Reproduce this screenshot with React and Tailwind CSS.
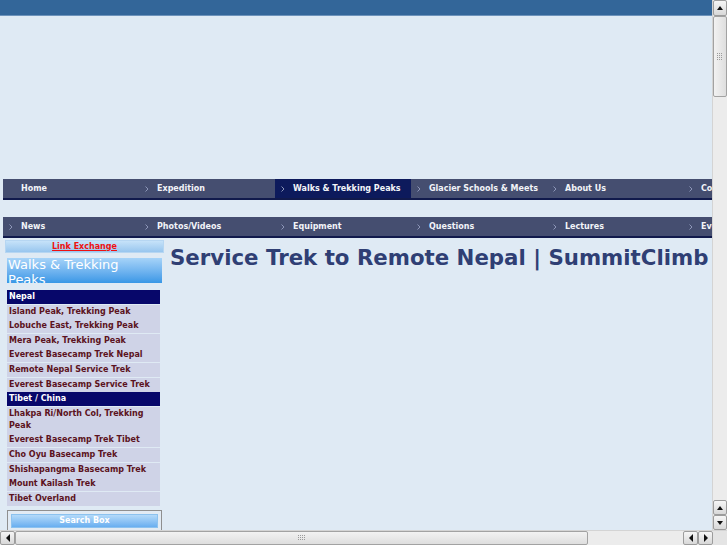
const NAV1 = ['Home', 'Expedition', 'Walks & Trekking Peaks', 'Glacier Schools & Meets', 'About Us', 'Contact']
const NAV2 = ['News', 'Photos/Videos', 'Equipment', 'Questions', 'Lectures', 'Events']

const SIDE = [
  { t: 'Nepal', head: true },
  { t: 'Island Peak, Trekking Peak' },
  { t: 'Lobuche East, Trekking Peak' },
  { t: 'Mera Peak, Trekking Peak' },
  { t: 'Everest Basecamp Trek Nepal' },
  { t: 'Remote Nepal Service Trek' },
  { t: 'Everest Basecamp Service Trek' },
  { t: 'Tibet / China', head: true },
  { t: 'Lhakpa Ri/North Col, Trekking Peak' },
  { t: 'Everest Basecamp Trek Tibet' },
  { t: 'Cho Oyu Basecamp Trek' },
  { t: 'Shishapangma Basecamp Trek' },
  { t: 'Mount Kailash Trek' },
  { t: 'Tibet Overland' },
]

function Chevron() {
  return (
    <svg width="4" height="6" viewBox="0 0 4 6" className="shrink-0">
      <path d="M0.5 0.5 L3 3 L0.5 5.5" fill="none" stroke="#8d96b8" strokeWidth="1" />
    </svg>
  )
}

function NavBar({ items, active, firstArrow }) {
  return (
    <div className="ml-[3px] flex h-[21px] w-max bg-[#454e70] border-b-2 border-[#111a4c]">
      {items.map((it, i) => (
        <div
          key={it}
          className={`flex h-[19px] w-[136px] shrink-0 items-center ${i === active ? 'bg-[#0d1a5c]' : ''}`}
        >
          <div className="w-[6px]" />
          <div className="w-[12px]">{(i > 0 || firstArrow) && <Chevron />}</div>
          <span className="whitespace-nowrap text-[8px] font-bold text-[#f2f4f8]">{it}</span>
        </div>
      ))}
    </div>
  )
}

function Arrow({ dir }) {
  const paths = {
    up: 'M1 5 L4 1 L7 5 Z',
    down: 'M1 1 L4 5 L7 1 Z',
    left: 'M5 0 L1 4 L5 8 Z',
    right: 'M1 0 L5 4 L1 8 Z',
  }
  const vert = dir === 'up' || dir === 'down'
  return (
    <svg width={vert ? 8 : 6} height={vert ? 6 : 8} viewBox={vert ? '0 0 8 6' : '0 0 6 8'}>
      <path d={paths[dir]} fill="#111" />
    </svg>
  )
}

function SButton({ dir, className = '' }) {
  return (
    <div
      className={`flex items-center justify-center rounded-[2px] border border-[#9c9c9c] bg-gradient-to-b from-[#f6f6f6] to-[#d8d8d8] ${className}`}
    >
      <Arrow dir={dir} />
    </div>
  )
}

function Grip({ vertical }) {
  const dots = []
  const cols = vertical ? 3 : 4
  const rows = vertical ? 4 : 3
  for (let r = 0; r < rows; r++)
    for (let c = 0; c < cols; c++)
      dots.push(<rect key={`${r}-${c}`} x={c * 2} y={r * 2} width="1" height="1" fill="#9a9a9a" />)
  return (
    <svg width={cols * 2} height={rows * 2}>
      {dots}
    </svg>
  )
}

export default function App() {
  return (
    <div className="flex h-[545px] w-[727px] flex-col overflow-hidden bg-[#dfeaf4] font-['DejaVu_Sans',sans-serif]">
      <div className="flex min-h-0 flex-1">
        {/* page */}
        <div className="min-w-0 flex-1 overflow-hidden">
          <div className="w-[830px]">
            <div className="h-[16px] bg-[#336699] border-b border-[#6d93bb]" />
            <div className="h-[163px]" />
            <NavBar items={NAV1} active={2} firstArrow={false} />
            <div className="h-[17px]" />
            <NavBar items={NAV2} active={-1} firstArrow={true} />

            <div className="mt-[2px] flex">
              {/* sidebar */}
              <div className="ml-[5px] w-[159px] shrink-0">
                <div className="flex h-[13px] items-center justify-center border border-[#b6d6f2] bg-gradient-to-b from-[#c6e2f9] to-[#98c6ee]">
                  <span className="text-[8px] font-bold text-[#ee1111] underline">Link Exchange</span>
                </div>

                <div className="mx-[2px] mt-[5px] h-[25px] overflow-hidden bg-gradient-to-b from-[#a6d3f8] to-[#3897e6] pl-[1px] pr-[12px] text-[13px] leading-[14.5px] text-white">
                  Walks &amp; Trekking Peaks
                </div>

                <div className="mx-[2px] mt-[7px] w-[153px]">
                  {SIDE.map((s) => (
                    <div
                      key={s.t}
                      className={`mb-[0.6px] py-[1px] pl-[2px] pr-[2px] text-[8px] font-bold leading-[12px] ${
                        s.head ? 'bg-[#07076a] text-white' : 'bg-[#cfd3e7] text-[#5b1220]'
                      }`}
                    >
                      {s.t}
                    </div>
                  ))}
                </div>

                <div className="mx-[2px] mt-[4px] h-[24px] border border-[#8f8f8f] bg-[#e2ebf4] px-[3px] pt-[3px]">
                  <div className="flex h-[14px] items-center justify-center border border-[#8cc2ef] bg-gradient-to-b from-[#b4daf9] to-[#68aef0]">
                    <span className="text-[8px] font-bold text-white">Search Box</span>
                  </div>
                </div>
              </div>

              {/* main */}
              <div className="ml-[6px] flex-1">
                <h1 className="mt-[5px] whitespace-nowrap text-[21.3px] font-bold leading-[26px] text-[#2f3f74]">
                  Service Trek to Remote Nepal | SummitClimb
                </h1>
              </div>
            </div>
          </div>
        </div>

        {/* vertical scrollbar */}
        <div className="flex w-[15px] shrink-0 flex-col bg-[#ececec] border-l border-[#d4d4d4]">
          <SButton dir="up" className="h-[16px]" />
          <div className="flex h-[81px] items-center justify-center rounded-[2px] border border-[#a2a2a2] bg-gradient-to-r from-[#f2f2f2] to-[#dedede]">
            <Grip vertical />
          </div>
          <div className="flex-1" />
          <SButton dir="up" className="h-[15px]" />
          <SButton dir="down" className="h-[15px]" />
        </div>
      </div>

      {/* horizontal scrollbar */}
      <div className="flex h-[15px] shrink-0 bg-[#ececec] border-t border-[#d4d4d4]">
        <SButton dir="left" className="w-[15px]" />
        <div className="flex w-[573px] items-center justify-center rounded-[2px] border border-[#a2a2a2] bg-gradient-to-b from-[#f2f2f2] to-[#dedede]">
          <Grip />
        </div>
        <div className="flex-1" />
        <SButton dir="left" className="w-[15px]" />
        <SButton dir="right" className="w-[15px]" />
        <div className="w-[14px] bg-[#e4e4e4]" />
      </div>
    </div>
  )
}
